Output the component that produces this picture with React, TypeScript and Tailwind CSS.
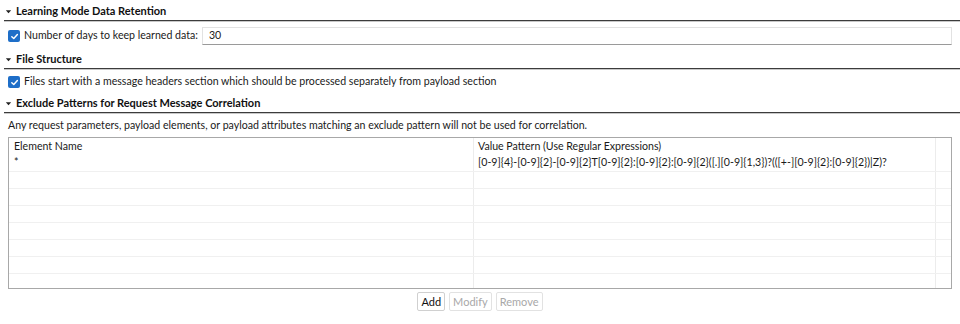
import React from "react";

function Check() {
  return (
    <span className="w-[12px] h-[12px] rounded-[2px] bg-[#1e6ec8] flex items-center justify-center shrink-0">
      <svg width="9" height="9" viewBox="0 0 10 10" fill="none">
        <path d="M2 5.2 L4.2 7.3 L8.2 2.8" stroke="white" strokeWidth="1.6" strokeLinecap="round" strokeLinejoin="round" />
      </svg>
    </span>
  );
}

function Section({ title }: { title: string }) {
  return (
    <div className="flex flex-col">
      <div className="flex items-center h-[18px] pl-[5px] gap-[4px]">
        <svg width="7" height="7" viewBox="0 0 8 8">
          <path d="M1 2.5 L7 2.5 L4 6 Z" fill="#222" />
        </svg>
        <span className="font-bold text-[11px] text-[#111]">{title}</span>
      </div>
      <div className="ml-[4px] h-[1px] bg-[#3c3c3c]" />
      <div className="ml-[4px] h-[1px] bg-[#c8c8c8]" />
    </div>
  );
}

const rows = ["*", "", "", "", "", "", "", ""];

export default function App() {
  return (
    <div className="w-[960px] h-[324px] bg-white text-[10.6px] text-[#1a1a1a] overflow-hidden font-['Lato','Noto_Sans',sans-serif]">
      <div className="pt-[2px]">
        <Section title="Learning Mode Data Retention" />
        <div className="flex items-center h-[28px] pl-[8px] pr-[8px] gap-[4px]">
          <Check />
          <span className="whitespace-nowrap">Number of days to keep learned data:</span>
          <div className="flex-1 h-[18px] border border-[#e2e2e2] border-b-[#9a9a9a] flex items-center pl-[6px]">30</div>
        </div>
        <Section title="File Structure" />
        <div className="flex items-center h-[24px] pl-[8px] gap-[4px]">
          <Check />
          <span>Files start with a message headers section which should be processed separately from payload section</span>
        </div>
        <Section title="Exclude Patterns for Request Message Correlation" />
        <div className="pl-[8px] h-[23px] flex items-center">
          Any request parameters, payload elements, or payload attributes matching an exclude pattern will not be used for correlation.
        </div>
        <div className="mx-[8px] border border-[#a8a8a8] h-[152px] overflow-hidden">
          <div className="flex h-[17px] items-center">
            <div className="w-[465px] pl-[5px] border-r border-[#ececec] h-full flex items-center">Element Name</div>
            <div className="w-[462px] pl-[4px] border-r border-[#ececec] h-full flex items-center">Value Pattern (Use Regular Expressions)</div>
            <div className="flex-1" />
          </div>
          {rows.map((r, i) => (
            <div key={i} className="flex h-[17px] items-center border-b border-[#f0f0f0]">
              <div className="w-[465px] pl-[5px] border-r border-[#ececec] h-full flex items-center">{r}</div>
              <div className="w-[462px] pl-[4px] border-r border-[#ececec] h-full flex items-center whitespace-nowrap">
                {i === 0 ? "[0-9]{4}-[0-9]{2}-[0-9]{2}T[0-9]{2}:[0-9]{2}:[0-9]{2}([.][0-9]{1,3})?(([+-][0-9]{2}:[0-9]{2})|Z)?" : ""}
              </div>
              <div className="flex-1" />
            </div>
          ))}
        </div>
        <div className="flex justify-center gap-[4px] pt-[3px]">
          <button className="h-[19px] px-[3px] border border-[#d0d0d0] rounded-[2px] text-[#111] text-[11px] leading-none">Add</button>
          <button className="h-[19px] px-[3px] border border-[#e2e2e2] rounded-[2px] text-[#a8a8a8] text-[11px] leading-none">Modify</button>
          <button className="h-[19px] px-[3px] border border-[#e2e2e2] rounded-[2px] text-[#a8a8a8] text-[11px] leading-none">Remove</button>
        </div>
      </div>
    </div>
  );
}
